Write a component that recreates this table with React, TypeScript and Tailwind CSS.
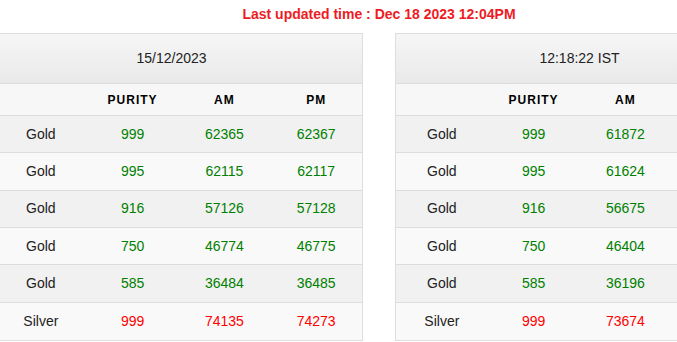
import React from 'react';

interface Rate {
  metal: string;
  purity: string;
  am: string;
  pm: string;
}

const leftRates: Rate[] = [
  { metal: 'Gold', purity: '999', am: '62365', pm: '62367' },
  { metal: 'Gold', purity: '995', am: '62115', pm: '62117' },
  { metal: 'Gold', purity: '916', am: '57126', pm: '57128' },
  { metal: 'Gold', purity: '750', am: '46774', pm: '46775' },
  { metal: 'Gold', purity: '585', am: '36484', pm: '36485' },
  { metal: 'Silver', purity: '999', am: '74135', pm: '74273' },
];

const rightRates: Rate[] = [
  { metal: 'Gold', purity: '999', am: '61872', pm: '' },
  { metal: 'Gold', purity: '995', am: '61624', pm: '' },
  { metal: 'Gold', purity: '916', am: '56675', pm: '' },
  { metal: 'Gold', purity: '750', am: '46404', pm: '' },
  { metal: 'Gold', purity: '585', am: '36196', pm: '' },
  { metal: 'Silver', purity: '999', am: '73674', pm: '' },
];

function RateTable({
  title,
  rates,
  titleClass,
  showPm,
}: {
  title: string;
  rates: Rate[];
  titleClass: string;
  showPm: boolean;
}) {
  return (
    <div className="w-[369px] shrink-0 border border-[#dddddd] bg-white">
      <div
        className={`h-[50px] flex items-center justify-center border-b border-[#dddddd] bg-gradient-to-b from-[#f6f6f6] to-[#e9e9e9] text-[14px] text-[#222222] ${titleClass}`}
      >
        {title}
      </div>
      <div className="grid grid-cols-4 h-[32px] items-center border-b border-[#dddddd] bg-[#f7f7f7] text-[12px] font-bold tracking-[1px] text-black text-center">
        <span></span>
        <span>PURITY</span>
        <span>AM</span>
        <span>{showPm ? 'PM' : ''}</span>
      </div>
      {rates.map((r, i) => {
        const tone = r.metal === 'Silver' ? 'text-[#ff0000]' : 'text-[#008000]';
        return (
          <div
            key={i}
            className={`grid grid-cols-4 h-[37.33px] items-center text-center text-[14px] ${
              i < rates.length - 1 ? 'border-b border-[#dddddd]' : ''
            } ${i % 2 === 0 ? 'bg-[#f1f1f1]' : 'bg-[#f9f9f9]'}`}
          >
            <span className="text-[#222222]">{r.metal}</span>
            <span className={tone}>{r.purity}</span>
            <span className={tone}>{r.am}</span>
            <span className={tone}>{r.pm}</span>
          </div>
        );
      })}
    </div>
  );
}

export default function App() {
  return (
    <div className="w-full h-[342px] overflow-hidden bg-white font-['Liberation_Sans',Arial,sans-serif]">
      <div className="w-[770px] -ml-[6px]">
        <div className="h-[33px] pt-[5px] text-center text-[14px] leading-[18px] font-bold text-[#ed1c24]">
          Last updated time : Dec 18 2023 12:04PM
        </div>
        <div className="flex gap-[32px]">
          <RateTable title="15/12/2023" rates={leftRates} titleClass="pr-[14px]" showPm={true} />
          <RateTable title="12:18:22 IST" rates={rightRates} titleClass="" showPm={false} />
        </div>
      </div>
    </div>
  );
}
